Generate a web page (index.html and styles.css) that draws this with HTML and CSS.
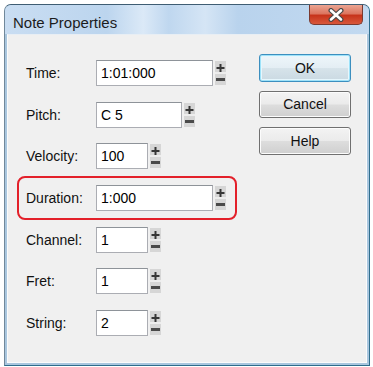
FILE: index.html
```html
<!DOCTYPE html>
<html lang="en">
<head>
    <meta charset="UTF-8">
    <title>Note Properties</title>
    <link rel="stylesheet" href="styles.css">
</head>
<body>

<div class="window">
    <div class="titlebar">
        <span class="title">Note Properties</span>
        <button class="close" aria-label="Close">
            <svg width="16" height="14" viewBox="0 0 16 14">
                <path d="M3 2.5l10 9M13 2.5l-10 9" stroke="#4a4a4a" stroke-width="5" stroke-linecap="round"/>
                <path d="M3 2.5l10 9M13 2.5l-10 9" stroke="#fff" stroke-width="2.6" stroke-linecap="round"/>
            </svg>
        </button>
    </div>

    <div class="client">
        <div class="form">
            <div class="row">
                <label for="time">Time:</label>
                <input class="field wide" id="time" type="text" value="1:01:000">
                <svg class="spin" width="13" height="26" viewBox="0 0 13 26"><rect x="1" y="1" width="11" height="24" fill="#d6d6d6"/><path d="M1 13h11" stroke="#f4f4f4" stroke-width="1.5"/><path d="M2.5 8h8M6.5 4v8" stroke="#363636" stroke-width="2"/><path d="M2 19.5h9" stroke="#4a4a4a" stroke-width="3"/></svg>
            </div>
            <div class="row">
                <label for="pitch">Pitch:</label>
                <input class="field mid" id="pitch" type="text" value="C 5">
                <svg class="spin" width="13" height="26" viewBox="0 0 13 26"><rect x="1" y="1" width="11" height="24" fill="#d6d6d6"/><path d="M1 13h11" stroke="#f4f4f4" stroke-width="1.5"/><path d="M2.5 8h8M6.5 4v8" stroke="#363636" stroke-width="2"/><path d="M2 19.5h9" stroke="#4a4a4a" stroke-width="3"/></svg>
            </div>
            <div class="row">
                <label for="velocity">Velocity:</label>
                <input class="field short" id="velocity" type="text" value="100">
                <svg class="spin" width="13" height="26" viewBox="0 0 13 26"><rect x="1" y="1" width="11" height="24" fill="#d6d6d6"/><path d="M1 13h11" stroke="#f4f4f4" stroke-width="1.5"/><path d="M2.5 8h8M6.5 4v8" stroke="#363636" stroke-width="2"/><path d="M2 19.5h9" stroke="#4a4a4a" stroke-width="3"/></svg>
            </div>
            <div class="row marked">
                <label for="duration">Duration:</label>
                <input class="field wide" id="duration" type="text" value="1:000">
                <svg class="spin" width="13" height="26" viewBox="0 0 13 26"><rect x="1" y="1" width="11" height="24" fill="#d6d6d6"/><path d="M1 13h11" stroke="#f4f4f4" stroke-width="1.5"/><path d="M2.5 8h8M6.5 4v8" stroke="#363636" stroke-width="2"/><path d="M2 19.5h9" stroke="#4a4a4a" stroke-width="3"/></svg>
            </div>
            <div class="row">
                <label for="channel">Channel:</label>
                <input class="field short" id="channel" type="text" value="1">
                <svg class="spin" width="13" height="26" viewBox="0 0 13 26"><rect x="1" y="1" width="11" height="24" fill="#d6d6d6"/><path d="M1 13h11" stroke="#f4f4f4" stroke-width="1.5"/><path d="M2.5 8h8M6.5 4v8" stroke="#363636" stroke-width="2"/><path d="M2 19.5h9" stroke="#4a4a4a" stroke-width="3"/></svg>
            </div>
            <div class="row">
                <label for="fret">Fret:</label>
                <input class="field short" id="fret" type="text" value="1">
                <svg class="spin" width="13" height="26" viewBox="0 0 13 26"><rect x="1" y="1" width="11" height="24" fill="#d6d6d6"/><path d="M1 13h11" stroke="#f4f4f4" stroke-width="1.5"/><path d="M2.5 8h8M6.5 4v8" stroke="#363636" stroke-width="2"/><path d="M2 19.5h9" stroke="#4a4a4a" stroke-width="3"/></svg>
            </div>
            <div class="row">
                <label for="string">String:</label>
                <input class="field short" id="string" type="text" value="2">
                <svg class="spin" width="13" height="26" viewBox="0 0 13 26"><rect x="1" y="1" width="11" height="24" fill="#d6d6d6"/><path d="M1 13h11" stroke="#f4f4f4" stroke-width="1.5"/><path d="M2.5 8h8M6.5 4v8" stroke="#363636" stroke-width="2"/><path d="M2 19.5h9" stroke="#4a4a4a" stroke-width="3"/></svg>
            </div>
        </div>

        <div class="buttons">
            <button class="btn default">OK</button>
            <button class="btn">Cancel</button>
            <button class="btn">Help</button>
        </div>
    </div>
</div>

</body>
</html>
```

FILE: styles.css
```css
body {
    margin: 0;
    background-color: #fff;
    font-family: 'Liberation Sans', Arial, sans-serif;
}

.window {
    box-sizing: border-box;
    width: 366px;
    height: 362px;
    margin: 4px 0 0 4px;
    display: flex;
    flex-direction: column;
    border: 1px solid #3f5d73;
    border-left-color: #71889a;
    border-right-color: #2e6d8c;
    border-bottom-color: #2e6d8c;
    border-radius: 7px 7px 0 0;
    background-color: #a9c6de;
}

.titlebar {
    height: 29px;
    display: flex;
    align-items: flex-start;
    justify-content: space-between;
    border-radius: 6px 6px 0 0;
    background: linear-gradient(90deg, #c9ddf2 0%, #bcd5ee 28%, #dbe9f7 38%, #bfd7ef 45%, #d5e5f5 55%, #b9d3ed 64%, #c2d9f0 100%);
}

.title {
    margin: 9px 0 0 8px;
    font-size: 15px;
    line-height: 17px;
    color: #1c1c1c;
}

.close {
    width: 54px;
    height: 20px;
    margin-right: 6px;
    padding: 0;
    display: flex;
    align-items: center;
    justify-content: center;
    border: 1px solid #7a3a30;
    border-top: none;
    border-radius: 0 0 5px 5px;
    background: linear-gradient(#eba592 0%, #dc7660 45%, #c7341b 55%, #d8583b 100%);
}

.client {
    flex: 1;
    margin: 0 2px 2px;
    display: grid;
    grid-template-columns: 233px 92px;
    align-items: start;
    padding-left: 18px;
    background-color: #f0f0f0;
    border: 1px solid #fbfbfb;
    border-top-color: #e8eef4;
}

.form {
    margin-top: 25px;
    display: flex;
    flex-direction: column;
    gap: 15.7px;
}

.row {
    width: max-content;
    display: flex;
    align-items: center;
    height: 26px;
    font-size: 14px;
    color: #111;
}

.row label {
    width: 70px;
}

.row.marked {
    margin: -9px 0 -9px -9px;
    padding: 7px 8px 7px 7px;
    border: 2px solid #e3202a;
    border-radius: 8px;
}

.field {
    box-sizing: border-box;
    height: 26px;
    margin: 0;
    padding: 0 4px;
    border: 1px solid #abadb3;
    border-top-color: #8e9399;
    background-color: #fff;
    font-family: 'Liberation Sans', Arial, sans-serif;
    font-size: 14px;
    color: #000;
}

.wide {
    width: 117px;
}

.mid {
    width: 86px;
}

.short {
    width: 52px;
}

.spin {
    margin-left: 1px;
}

.buttons {
    margin-top: 19px;
    display: flex;
    flex-direction: column;
    gap: 9px;
}

.btn {
    height: 27.5px;
    padding: 0;
    border: 1px solid #707070;
    border-radius: 3px;
    background: linear-gradient(#f3f3f3 0%, #ebebeb 48%, #dddddd 52%, #cfcfcf 100%);
    box-shadow: inset 0 0 0 1px #fcfcfc;
    font-family: 'Liberation Sans', Arial, sans-serif;
    font-size: 14px;
    color: #111;
}

.btn.default {
    border-color: #3c8fbf;
    box-shadow: inset 0 0 0 1px #9ee2f9, inset 0 0 0 2px #e6f6fc;
    background: linear-gradient(#eef6fa 0%, #e4eef4 48%, #d6e3ea 52%, #cad9e2 100%);
}
```
